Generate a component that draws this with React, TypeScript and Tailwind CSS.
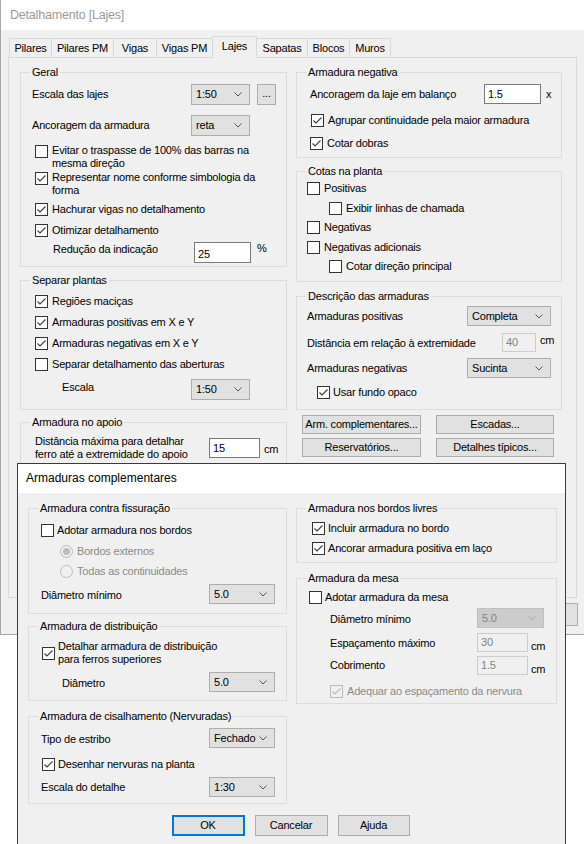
import React from "react";

// Windows-style dialog: "Detalhamento [Lajes]" with the "Armaduras complementares" dialog on top

type CheckProps = { checked?: boolean; disabled?: boolean };

function Check({ checked, disabled }: CheckProps) {
  return (
    <span
      className={`flex h-[13px] w-[13px] shrink-0 items-center justify-center border ${
        disabled ? "border-[#bcbcbc] bg-[#f0f0f0]" : "border-[#333333] bg-white"
      }`}
    >
      {checked && (
        <svg width="11" height="11" viewBox="0 0 11 11">
          <path d="M1.5 5.5 L4 8 L9.5 2.5" fill="none" stroke={disabled ? "#bcbcbc" : "#3c3c3c"} strokeWidth="1.1" />
        </svg>
      )}
    </span>
  );
}

function CheckRow({
  label,
  checked,
  disabled,
  className = "",
  gap = "ml-[4px]",
}: {
  label: React.ReactNode;
  checked?: boolean;
  disabled?: boolean;
  className?: string;
  gap?: string;
}) {
  return (
    <div className={`flex items-center ${className}`}>
      <Check checked={checked} disabled={disabled} />
      <span className={`${gap} leading-[13px] ${disabled ? "text-[#8a8a8a]" : ""}`}>{label}</span>
    </div>
  );
}

function Radio({ label, selected, className = "" }: { label: string; selected?: boolean; className?: string }) {
  return (
    <div className={`flex h-[13px] items-center ${className}`}>
      <span className="flex h-[13px] w-[13px] items-center justify-center rounded-full border border-[#bcbcbc] bg-[#f0f0f0]">
        {selected && <span className="h-[7px] w-[7px] rounded-full bg-[#bcbcbc]" />}
      </span>
      <span className="ml-[4px] leading-[13px] text-[#8a8a8a]">{label}</span>
    </div>
  );
}

function Chevron({ disabled }: { disabled?: boolean }) {
  return (
    <svg width="8" height="5" viewBox="0 0 8 5">
      <path d="M0.5 0.5 L4 4 L7.5 0.5" fill="none" stroke={disabled ? "#a8a8a8" : "#555555"} strokeWidth="1" />
    </svg>
  );
}

function Select({ value, className = "", disabled }: { value: string; className?: string; disabled?: boolean }) {
  return (
    <div
      className={`flex shrink-0 items-center justify-between border pl-[4px] pr-[7px] ${
        disabled ? "border-[#bfbfbf] bg-[#cccccc] text-[#838383]" : "border-[#adadad] bg-[#e1e1e1]"
      } ${className}`}
    >
      <span>{value}</span>
      <Chevron disabled={disabled} />
    </div>
  );
}

function TextBox({ value, className = "", disabled }: { value: string; className?: string; disabled?: boolean }) {
  return (
    <div
      className={`flex shrink-0 items-center border pl-[3px] ${
        disabled ? "border-[#cccccc] bg-[#f0f0f0] text-[#838383]" : "border-[#7a7a7a] bg-white"
      } ${className}`}
    >
      {value}
    </div>
  );
}

function Btn({ label, className = "" }: { label?: string; className?: string }) {
  return (
    <div className={`flex shrink-0 items-center justify-center border border-[#adadad] bg-[#e1e1e1] ${className}`}>
      {label}
    </div>
  );
}

function Group({ title, className = "", children }: { title: string; className?: string; children?: React.ReactNode }) {
  return (
    <fieldset className={`border border-[#dcdcdc] ${className}`}>
      <legend className="ml-[9px] px-[2px] leading-[14px]">{title}</legend>
      {children}
    </fieldset>
  );
}

const tabs = [
  { name: "Pilares", w: "w-[43px]" },
  { name: "Pilares PM", w: "w-[63px]" },
  { name: "Vigas", w: "w-[44px]" },
  { name: "Vigas PM", w: "w-[57px]" },
  { name: "Lajes", w: "w-[45px]", active: true },
  { name: "Sapatas", w: "w-[52px]" },
  { name: "Blocos", w: "w-[43px]" },
  { name: "Muros", w: "w-[42px]" },
];

function BackDialog() {
  return (
    <div className="h-[635px] w-[584px] border-b border-l border-[#a8a8a8] bg-[#f0f0f0]">
      <div className="flex h-[30px] items-center bg-white pl-[9px] text-[12.5px] text-[#9a9a9a]">Detalhamento [Lajes]</div>

      {/* tabs */}
      <div className="mt-[6px] flex h-[21px] items-end pl-[8px]">
        {tabs.map((t, i) => (
          <div
            key={t.name}
            className={`flex items-center justify-center border-x border-t border-[#d9d9d9] ${t.w} ${i > 0 ? "-ml-px" : ""} ${
              t.active ? "relative z-10 -mb-px h-[22px] bg-[#f0f0f0] pb-[3px]" : "h-[19px] bg-[#f0f0f0] pt-[1px]"
            }`}
          >
            {t.name}
          </div>
        ))}
      </div>

      <div className="ml-[7px] flex h-[541px] w-[569px] gap-[9px] border border-[#d9d9d9] pl-[11px] pt-[7px]">
        {/* left column */}
        <div className="flex w-[267px] flex-col">
          <Group title="Geral" className="h-[202px]">
            <div className="mt-[5px] flex h-[21px] items-center pl-[11px]">
              <span className="w-[159px]">Escala das lajes</span>
              <Select value="1:50" className="h-[21px] w-[59px]" />
              <Btn label="..." className="ml-[7px] h-[21px] w-[19px] pb-[3px]" />
            </div>
            <div className="mt-[10px] flex h-[21px] items-center pl-[11px]">
              <span className="w-[159px]">Ancoragem da armadura</span>
              <Select value="reta" className="h-[21px] w-[59px]" />
            </div>
            <div className="mt-[8px] flex items-start pl-[14px]">
              <span className="mt-[1px]">
                <Check />
              </span>
              <span className="ml-[4px] leading-[13px]">
                Evitar o traspasse de 100% das barras na
                <br />
                mesma direção
              </span>
            </div>
            <div className="mt-[1px] flex items-start pl-[14px]">
              <span className="mt-[1px]">
                <Check checked />
              </span>
              <span className="ml-[4px] leading-[13px]">
                Representar nome conforme simbologia da
                <br />
                forma
              </span>
            </div>
            <CheckRow label="Hachurar vigas no detalhamento" checked className="mt-[6px] pl-[14px]" />
            <CheckRow label="Otimizar detalhamento" checked className="mt-[8px] pl-[14px]" />
            <div className="mt-[5px] flex h-[21px] items-start pl-[32px]">
              <span className="mt-[1px] w-[141px]">Redução da indicação</span>
              <TextBox value="25" className="h-[21px] w-[57px] pt-[3px]" />
              <span className="ml-[6px]">%</span>
            </div>
          </Group>

          <Group title="Separar plantas" className="mt-[6px] h-[137px]">
            <CheckRow label="Regiões maciças" checked className="mt-[8px] pl-[14px]" />
            <CheckRow label="Armaduras positivas em X e Y" checked className="mt-[8px] pl-[14px]" />
            <CheckRow label="Armaduras negativas em X e Y" checked className="mt-[8px] pl-[14px]" />
            <CheckRow label="Separar detalhamento das aberturas" className="mt-[8px] pl-[14px]" />
            <div className="mt-[8px] flex h-[21px] items-center pl-[41px]">
              <span className="w-[129px] pb-[4px]">Escala</span>
              <Select value="1:50" className="h-[21px] w-[59px]" />
            </div>
          </Group>

          <Group title="Armadura no apoio" className="mt-[5px] h-[180px]">
            <div className="mt-[6px] flex items-center pl-[14px]">
              <span className="w-[174px] leading-[13px]">
                Distância máxima para detalhar
                <br />
                ferro até a extremidade do apoio
              </span>
              <TextBox value="15" className="h-[20px] w-[51px]" />
              <span className="ml-[4px] mt-[2px]">cm</span>
            </div>
          </Group>
        </div>

        {/* right column */}
        <div className="flex w-[266px] flex-col">
          <Group title="Armadura negativa" className="h-[93px]">
            <div className="mt-[5px] flex h-[20px] items-center pl-[13px]">
              <span className="w-[174px]">Ancoragem da laje em balanço</span>
              <TextBox value="1.5" className="h-[20px] w-[57px]" />
              <span className="ml-[5px]">x</span>
            </div>
            <CheckRow label="Agrupar continuidade pela maior armadura" checked className="mt-[10px] pl-[14px]" />
            <CheckRow label="Cotar dobras" checked className="mt-[10px] pl-[13px]" />
          </Group>

          <Group title="Cotas na planta" className="mt-[6px] h-[118px]">
            <CheckRow label="Positivas" className="mt-[4px] pl-[10px]" gap="ml-[4px]" />
            <CheckRow label="Exibir linhas de chamada" className="mt-[7px] pl-[32px]" />
            <CheckRow label="Negativas" className="mt-[6px] pl-[10px]" />
            <CheckRow label="Negativas adicionais" className="mt-[7px] pl-[10px]" />
            <CheckRow label="Cotar direção principal" className="mt-[6px] pl-[32px]" />
          </Group>

          <Group title="Descrição das armaduras" className="mt-[7px] h-[121px]">
            <div className="mt-[3px] flex h-[20px] items-center pl-[10px]">
              <span className="w-[160px]">Armaduras positivas</span>
              <Select value="Completa" className="h-[20px] w-[84px]" />
            </div>
            <div className="mt-[7px] flex h-[19px] items-center pl-[10px]">
              <span className="mt-[2px] w-[195px]">Distância em relação à extremidade</span>
              <TextBox value="40" disabled className="h-[19px] w-[34px]" />
              <span className="-mt-[4px] ml-[4px]">cm</span>
            </div>
            <div className="mt-[6px] flex h-[20px] items-center pl-[10px]">
              <span className="w-[160px]">Armaduras negativas</span>
              <Select value="Sucinta" className="h-[20px] w-[84px]" />
            </div>
            <CheckRow label="Usar fundo opaco" checked className="mt-[8px] pl-[20px]" gap="ml-[3px]" />
          </Group>

          <div className="mt-[5px] flex gap-[15px] pl-[6px]">
            <Btn label="Arm. complementares..." className="h-[19px] w-[119px]" />
            <Btn label="Escadas..." className="h-[19px] w-[118px]" />
          </div>
          <div className="mt-[4px] flex gap-[15px] pl-[6px]">
            <Btn label="Reservatórios..." className="h-[19px] w-[119px]" />
            <Btn label="Detalhes típicos..." className="h-[19px] w-[118px]" />
          </div>
        </div>
      </div>

      {/* bottom buttons, hidden behind the front dialog except for one edge */}
      <div className="mt-[5px] flex justify-end gap-[7px] pr-[6px]">
        <Btn className="h-[23px] w-[75px]" />
        <Btn className="h-[23px] w-[75px]" />
        <Btn className="h-[23px] w-[75px]" />
      </div>
    </div>
  );
}

function FrontDialog() {
  return (
    <div className="absolute left-[17px] top-[463px] h-[400px] w-[549px] border border-[#3a3a3a] bg-[#f0f0f0]">
      <div className="flex h-[29px] items-center bg-white pl-[8px] text-[12px] tracking-normal">Armaduras complementares</div>

      <div className="flex gap-[9px] pl-[10px] pt-[8px]">
        {/* left column */}
        <div className="flex w-[259px] flex-col">
          <Group title="Armadura contra fissuração" className="h-[113px]">
            <CheckRow label="Adotar armadura nos bordos" className="mt-[9px] pl-[12px]" gap="ml-[3px]" />
            <Radio label="Bordos externos" selected className="mt-[8px] pl-[31px]" />
            <Radio label="Todas as continuidades" className="mt-[7px] pl-[31px]" />
            <div className="mt-[6px] flex h-[20px] items-center pl-[12px]">
              <span className="mt-[2px] w-[168px]">Diâmetro mínimo</span>
              <Select value="5.0" className="h-[20px] w-[66px]" />
            </div>
          </Group>

          <Group title="Armadura de distribuição" className="mt-[5px] h-[82px]">
            <div className="mt-[7px] flex items-center pl-[13px]">
              <Check checked />
              <span className="ml-[3px] leading-[13px]">
                Detalhar armadura de distribuição
                <br />
                para ferros superiores
              </span>
            </div>
            <div className="mt-[6px] flex h-[20px] items-center pl-[33px]">
              <span className="mt-[2px] w-[147px]">Diâmetro</span>
              <Select value="5.0" className="h-[20px] w-[66px]" />
            </div>
          </Group>

          <Group title="Armadura de cisalhamento (Nervuradas)" className="mt-[8px] h-[95px]">
            <div className="mt-[5px] flex h-[20px] items-center pl-[12px]">
              <span className="mt-[2px] w-[168px]">Tipo de estribo</span>
              <Select value="Fechado" className="h-[20px] w-[66px]" />
            </div>
            <CheckRow label="Desenhar nervuras na planta" checked className="mt-[10px] pl-[13px]" gap="ml-[3px]" />
            <div className="mt-[6px] flex h-[20px] items-center pl-[12px]">
              <span className="w-[168px]">Escala do detalhe</span>
              <Select value="1:30" className="h-[20px] w-[66px]" />
            </div>
          </Group>
        </div>

        {/* right column */}
        <div className="flex w-[261px] flex-col">
          <Group title="Armadura nos bordos livres" className="h-[62px]">
            <CheckRow label="Incluir armadura no bordo" checked className="mt-[7px] pl-[15px]" gap="ml-[3px]" />
            <CheckRow label="Ancorar armadura positiva em laço" checked className="mt-[7px] pl-[15px]" gap="ml-[3px]" />
          </Group>

          <Group title="Armadura da mesa" className="mt-[8px] h-[133px]">
            <CheckRow label="Adotar armadura da mesa" className="mt-[6px] pl-[12px]" gap="ml-[3px]" />
            <div className="mt-[4px] flex h-[20px] items-center pl-[33px]">
              <span className="mt-[3px] w-[147px]">Diâmetro mínimo</span>
              <Select value="5.0" disabled className="h-[20px] w-[67px]" />
            </div>
            <div className="mt-[5px] flex h-[19px] items-center pl-[33px]">
              <span className="mt-[2px] w-[147px]">Espaçamento máximo</span>
              <TextBox value="30" disabled className="h-[19px] w-[51px]" />
              <span className="ml-[3px] mt-[8px]">cm</span>
            </div>
            <div className="mt-[4px] flex h-[19px] items-center pl-[33px]">
              <span className="w-[147px]">Cobrimento</span>
              <TextBox value="1.5" disabled className="h-[19px] w-[51px]" />
              <span className="ml-[3px] mt-[7px]">cm</span>
            </div>
            <CheckRow label="Adequar ao espaçamento da nervura" checked disabled className="mt-[10px] pl-[33px]" gap="ml-[4px]" />
          </Group>
        </div>
      </div>

      <div className="mt-[11px] flex justify-center gap-[10px] pr-[2px]">
        <div className="flex h-[21px] w-[73px] items-center justify-center border-2 border-[#0078d7] bg-[#e1e1e1]">OK</div>
        <Btn label="Cancelar" className="h-[21px] w-[73px]" />
        <Btn label="Ajuda" className="h-[21px] w-[72px]" />
      </div>
    </div>
  );
}

export default function App() {
  return (
    <div className="relative h-[844px] w-[584px] overflow-hidden bg-white font-['Liberation_Sans',Arial,sans-serif] text-[11px] leading-[13px] tracking-[-0.2px] text-black">
      <BackDialog />
      <FrontDialog />
    </div>
  );
}
